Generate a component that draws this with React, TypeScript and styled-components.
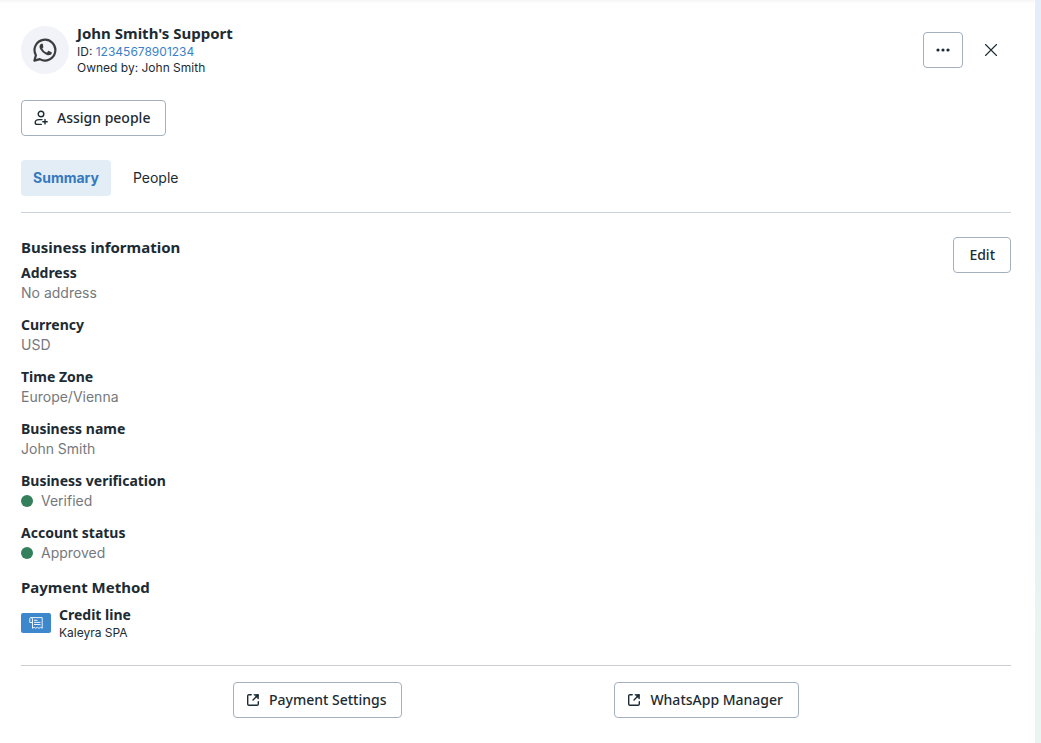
import React, { useState } from "react";
import styled, { createGlobalStyle } from "styled-components";

const ink = "#1c2b33";
const blue = "#3578be";
const heading = '"Noto Sans", "Open Sans", sans-serif';
const body = 'Inter, "Liberation Sans", sans-serif';

const GlobalStyle = createGlobalStyle`
  *, *::before, *::after { box-sizing: border-box; }
  body {
    margin: 0;
    color: ${ink};
    font-family: ${body};
    font-size: 14px;
    line-height: 20px;
    -webkit-font-smoothing: antialiased;
  }
  h1, h2, dl, dd, p { margin: 0; }
  svg { display: block; flex: none; }
`;

const Page = styled.div`
  min-height: 100vh;
  padding-right: 6px;
  background: linear-gradient(#e4eef8 0%, #e4eef8 35%, #e8f5f1 85%);
  display: flex;
`;

const Panel = styled.main`
  flex: 1;
  padding: 24px 24px 24px 21px;
  background: linear-gradient(#f5f5f5, #ffffff 4px);
`;

const Header = styled.header`
  display: flex;
  align-items: center;
  gap: 8px;
  margin-bottom: 24px;
`;

const Avatar = styled.div`
  width: 48px;
  height: 48px;
  border-radius: 50%;
  background: #f1f3f8;
  color: #3a3c3e;
  display: flex;
  align-items: center;
  justify-content: center;
`;

const Identity = styled.div`
  flex: 1;
`;

const Name = styled.h1`
  margin-bottom: 2px;
  font: 700 15px/18px ${heading};
`;

const Meta = styled.p`
  font-size: 12px;
  line-height: 16px;
`;

const IdLink = styled.a`
  color: #3b7fc9;
  text-decoration: none;
`;

const outline = `
  display: inline-flex;
  align-items: center;
  justify-content: center;
  height: 36px;
  border: 1px solid #a4b0bc;
  border-radius: 4px;
  background: #ffffff;
  color: ${ink};
  font: 500 14px/20px ${heading};
  text-decoration: none;
  white-space: nowrap;
  cursor: pointer;
`;

const Button = styled.button<{ $icon?: boolean }>`
  ${outline}
  gap: 8px;
  padding: 0 15px 0 ${(p) => (p.$icon ? 11 : 15)}px;
`;

const ButtonLink = styled.a`
  ${outline}
  gap: 8px;
  padding: 0 15px 0 11px;
`;

const IconButton = styled.button<{ $plain?: boolean }>`
  ${outline}
  width: 40px;
  padding: 0;
  ${(p) => p.$plain && "border-color: transparent; background: transparent;"}
`;

const Tabs = styled.div`
  display: flex;
  gap: 10px;
  margin-top: 24px;
  padding-bottom: 16px;
  border-bottom: 1px solid #cbd2d9;
`;

const Tab = styled.button<{ $active: boolean }>`
  height: 36px;
  padding: 0 12px;
  border: 0;
  border-radius: 4px;
  background: ${(p) => (p.$active ? "#e2edf6" : "transparent")};
  color: ${(p) => (p.$active ? blue : ink)};
  font: ${(p) => (p.$active ? 700 : 400)} 14px/20px ${body};
  cursor: pointer;
`;

const Summary = styled.section`
  display: flex;
  align-items: flex-start;
  justify-content: space-between;
  padding: 24px 0;
  border-bottom: 1px solid #cbcfd3;
`;

const SectionTitle = styled.h2`
  margin-bottom: 6px;
  font: 700 15px/20px ${heading};
`;

const Details = styled.dl`
  display: grid;
  gap: 12px;
  margin-bottom: 14px;
`;

const Term = styled.dt`
  font: 700 14px/20px ${heading};
`;

const Value = styled.dd`
  display: flex;
  align-items: center;
  gap: 8px;
  color: #75797d;
`;

const Dot = styled.span`
  width: 12px;
  height: 12px;
  border-radius: 50%;
  background: #35805c;
`;

const Payment = styled.div`
  display: flex;
  align-items: center;
  gap: 8px;
  margin-top: 8px;
`;

const CardBadge = styled.div`
  width: 30px;
  height: 20px;
  border-radius: 2px;
  background: #3d87cd;
  display: flex;
  align-items: center;
  justify-content: center;
`;

const PaymentName = styled.p`
  font: 700 14px/20px ${heading};
`;

const Footer = styled.footer`
  display: flex;
  justify-content: space-evenly;
  padding-top: 16px;
`;

const WhatsAppIcon = () => (
  <svg width="24" height="24" viewBox="0 0 24 24" aria-hidden="true">
    <path d="M1.4 22.6L2.9 17.2A10.4 10.4 0 1 1 6.8 21.1Z" fill="none" stroke="currentColor" strokeWidth="2.2" strokeLinejoin="round" />
    <path
      d="M8.9 6.6C8.7 6.1 8.5 6.1 8.2 6.1H7.6C7.3 6.1 6.9 6.2 6.6 6.6C6.2 7 5.5 7.7 5.5 9.1C5.5 10.5 6.6 11.9 6.7 12.1C6.9 12.3 8.8 15.4 11.9 16.7C14.4 17.7 14.9 17.5 15.5 17.4C16.1 17.4 17.3 16.7 17.6 16C17.8 15.3 17.8 14.7 17.7 14.6C17.6 14.4 17.4 14.4 17.1 14.2L14.9 13.2C14.6 13.1 14.4 13 14.2 13.4L13.2 14.6C13 14.8 12.8 14.8 12.5 14.7C12.2 14.5 11.2 14.2 10.1 13.2C9.2 12.4 8.6 11.4 8.4 11.1C8.2 10.8 8.4 10.6 8.5 10.5L9.2 9.7C9.4 9.4 9.4 9.2 9.3 9Z"
      fill="currentColor"
      transform="translate(1 -0.3)"
    />
  </svg>
);

const PersonAddIcon = () => (
  <svg width="16" height="16" viewBox="0 0 16 16" fill="none" stroke="currentColor" strokeWidth="1.4" strokeLinecap="round" aria-hidden="true">
    <circle cx="8" cy="4" r="2.8" />
    <path d="M8.3 14.4H4.2C2.9 14.4 2.2 13.7 2.2 12.7C2.2 10.8 4 9.6 6 9.6H9" />
    <path d="M12 9.5V13.9M9.8 11.7H14.2" />
  </svg>
);

const ExternalIcon = () => (
  <svg width="16" height="16" viewBox="0 0 16 16" fill="none" stroke="currentColor" strokeWidth="1.4" strokeLinecap="round" strokeLinejoin="round" aria-hidden="true">
    <path d="M6.2 2.7H4A1.3 1.3 0 0 0 2.7 4V12A1.3 1.3 0 0 0 4 13.3H12A1.3 1.3 0 0 0 13.3 12V9.8" />
    <path d="M8 8L13 3" />
    <path d="M9.3 2.6H13.4V6.7Z" fill="currentColor" strokeWidth="0.8" />
  </svg>
);

const DotsIcon = () => (
  <svg width="16" height="16" viewBox="0 0 16 16" fill="currentColor" aria-hidden="true">
    <circle cx="3" cy="8" r="1.6" />
    <circle cx="8" cy="8" r="1.6" />
    <circle cx="13" cy="8" r="1.6" />
  </svg>
);

const CloseIcon = () => (
  <svg width="16" height="16" viewBox="0 0 16 16" fill="none" stroke="currentColor" strokeWidth="1.1" strokeLinecap="round" aria-hidden="true">
    <path d="M2.5 2.5L13.5 13.5M13.5 2.5L2.5 13.5" />
  </svg>
);

const ReceiptIcon = () => (
  <svg width="14" height="12" viewBox="0 0 14 12" fill="none" stroke="#ffffff" strokeWidth="0.9" strokeLinejoin="round" aria-hidden="true">
    <path d="M3.5 5.5H0.8V1.5Q0.8 0.6 2 0.6H13.2V11.3L11.6 10.3L10 11.3L8.4 10.3L6.8 11.3L5.2 10.3L3.5 11.3V1.8Q3.3 0.6 2 0.6" />
    <path d="M5 3.3H8.5M5 5.4H11.5M5 7.5H11.5" />
  </svg>
);

const details = [
  { term: "Address", value: "No address" },
  { term: "Currency", value: "USD" },
  { term: "Time Zone", value: "Europe/Vienna" },
  { term: "Business name", value: "John Smith" },
  { term: "Business verification", value: "Verified", status: true },
  { term: "Account status", value: "Approved", status: true },
];

const tabs = ["Summary", "People"];

export default function App() {
  const [active, setActive] = useState(tabs[0]);
  return (
    <Page>
      <GlobalStyle />
      <Panel>
        <Header>
          <Avatar>
            <WhatsAppIcon />
          </Avatar>
          <Identity>
            <Name>John Smith's Support</Name>
            <Meta>
              ID: <IdLink href="#account">12345678901234</IdLink>
            </Meta>
            <Meta>Owned by: John Smith</Meta>
          </Identity>
          <IconButton type="button" aria-label="More options">
            <DotsIcon />
          </IconButton>
          <IconButton type="button" $plain aria-label="Close">
            <CloseIcon />
          </IconButton>
        </Header>

        <Button type="button" $icon>
          <PersonAddIcon />
          Assign people
        </Button>

        <Tabs role="tablist">
          {tabs.map((tab) => (
            <Tab key={tab} type="button" role="tab" aria-selected={tab === active} $active={tab === active} onClick={() => setActive(tab)}>
              {tab}
            </Tab>
          ))}
        </Tabs>

        <Summary>
          <div>
            <SectionTitle>Business information</SectionTitle>
            <Details>
              {details.map((d) => (
                <div key={d.term}>
                  <Term>{d.term}</Term>
                  <Value>
                    {d.status && <Dot />}
                    {d.value}
                  </Value>
                </div>
              ))}
            </Details>
            <SectionTitle>Payment Method</SectionTitle>
            <Payment>
              <CardBadge>
                <ReceiptIcon />
              </CardBadge>
              <div>
                <PaymentName>Credit line</PaymentName>
                <Meta>Kaleyra SPA</Meta>
              </div>
            </Payment>
          </div>
          <Button type="button">Edit</Button>
        </Summary>

        <Footer>
          <ButtonLink href="#payment-settings">
            <ExternalIcon />
            Payment Settings
          </ButtonLink>
          <ButtonLink href="#whatsapp-manager">
            <ExternalIcon />
            WhatsApp Manager
          </ButtonLink>
        </Footer>
      </Panel>
    </Page>
  );
}
